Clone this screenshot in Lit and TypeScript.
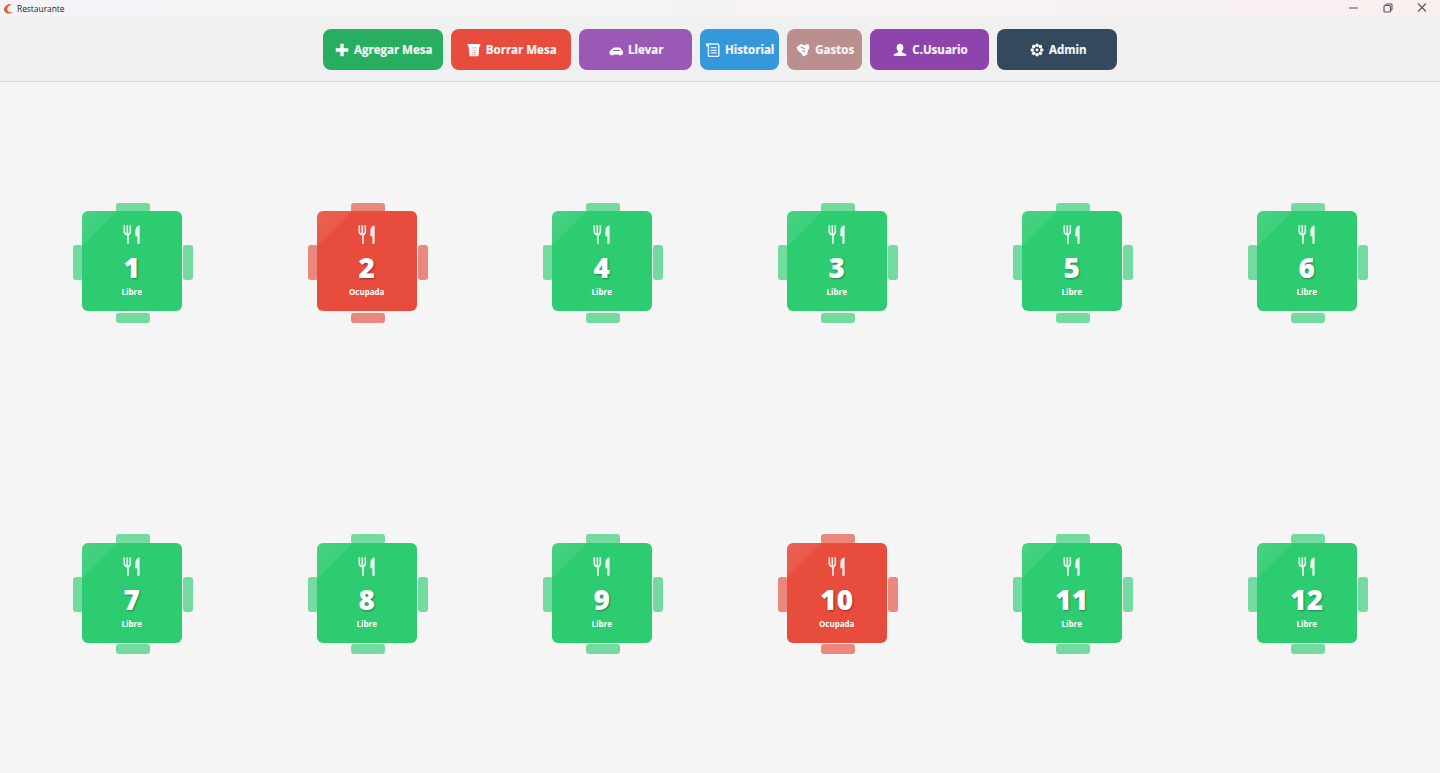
import { LitElement, html, css, svg } from "lit";
import { customElement } from "lit/decorators.js";

const gearDots = [0, 45, 90, 135, 180, 225, 270, 315].map((a) => {
  const r = (a * Math.PI) / 180;
  return svg`<circle cx="${7.5 + 5.1 * Math.cos(r)}" cy="${7.5 + 5.1 * Math.sin(r)}" r="1.9" fill="#fff"/>`;
});

const icons: Record<string, unknown> = {
  plus: svg`<path d="M5.700.8h3.600v4.900h4.900v3.600H9.300v4.900H5.700V9.300H.8V5.700h4.900z" fill="#fff"/>`,
  trash: svg`<path d="M.8 1h13.400v2.600h-1l-.9 10.600H2.700L1.800 3.600h-1z" fill="#fff"/><path d="M4.500 5.200h6M4.800 7.700h5.400M5 10.200h5M5.300 12.300h4.400" stroke="#eeaaa2" stroke-width=".9" fill="none"/>`,
  car: svg`<path d="M.6 12.300V9.700c0-1 .7-1.700 1.600-1.800l2.200-2.500c.4-.5 1-.7 1.600-.7h5c.8 0 1.400.4 1.700 1l.9 2.100c.8.200 1.300.8 1.300 1.600v2.900h-1.600c-.3.700-.9 1-1.500 1s-1.200-.3-1.500-1H5.200c-.3.700-.9 1-1.500 1s-1.200-.3-1.500-1z" fill="#fff"/><path d="M4.200 8h7.700" stroke="#9b59b6" stroke-width="1.200"/>`,
  scroll: svg`<path d="M.8 1h11.200c1 0 1.800.7 1.800 1.600v10.200c0 1-.8 1.700-1.800 1.700H3.500l-.9-.7V2.800H.8z" fill="none" stroke="#e6f3fc" stroke-width="1.500"/><path d="M5 5h6.500M5 7.800h6.500M5 10.600h6.500" stroke="#e6f3fc" stroke-width="1.300"/>`,
  money: svg`<path d="M.6 4.500 5.400 1.200l3 1.200 5-1.400 1 4.200-1.600 2.800-.9 4.200-3.900 2.200-2.400-3.300L2 8.400z" fill="#fff"/><path d="M5 4.300l4.600 2.200M6.600 8l3.400 1.600" stroke="#bc8f8f" stroke-width="1.200"/>`,
  user: svg`<path d="M7.500.8c2.300 0 3.600 1.700 3.600 4 0 1.800-.8 3.200-1.700 4v1.100l3.700 1.700c.8.400 1.200 1.100 1.200 2.200H.7c0-1.100.4-1.800 1.200-2.200l3.700-1.700V8.800c-.9-.8-1.700-2.200-1.700-4 0-2.300 1.300-4 3.600-4z" fill="#fff"/>`,
  gear: svg`${gearDots}<circle cx="7.500" cy="7.500" r="2.600" fill="#34495e"/><circle cx="7.500" cy="7.500" r="1.500" fill="#fff"/>`,
};

const buttons = [
  { label: "Agregar Mesa", icon: "plus", cls: "b-add", wide: 120 },
  { label: "Borrar Mesa", icon: "trash", cls: "b-del", wide: 120 },
  { label: "Llevar", icon: "car", cls: "b-take", wide: 113 },
  { label: "Historial", icon: "scroll", cls: "b-hist", wide: 79 },
  { label: "Gastos", icon: "money", cls: "b-cost", wide: 75 },
  { label: "C.Usuario", icon: "user", cls: "b-user", wide: 119.6 },
  { label: "Admin", icon: "gear", cls: "b-admin", wide: 120 },
];

const tables = [
  [1, false], [2, true], [4, false], [3, false], [5, false], [6, false],
  [7, false], [8, false], [9, false], [10, true], [11, false], [12, false],
] as [number, boolean][];

@customElement("app-root")
export class AppRoot extends LitElement {
  static styles = css`
    :host {
      display: flex;
      flex-direction: column;
      height: 773px;
      overflow: hidden;
      background: #f5f5f5;
      font-family: "Open Sans", "Liberation Sans", sans-serif;
    }
    .titlebar {
      height: 16px;
      flex: none;
      display: flex;
      align-items: center;
      padding-left: 3px;
      padding-right: 1px;
      background: linear-gradient(90deg, #f5f3f7, #f5f2f6 50%, #f9f0ef);
      color: #222;
      font-size: 8.4px;
    }
    .logo { width: 10px; height: 11px; margin-right: 4px; }
    .caption { margin-left: auto; display: flex; }
    .caption svg { width: 34px; height: 16px; display: block; }
    .toolbar {
      height: 66px;
      flex: none;
      box-sizing: border-box;
      padding-top: 13px;
      display: flex;
      justify-content: center;
      gap: 8px;
      background: #f0f0f0;
      border-bottom: 1px solid #dcdcdc;
    }
    .btn {
      height: 41px;
      box-sizing: border-box;
      padding-left: 2px;
      border-radius: 8px;
      display: flex;
      align-items: center;
      justify-content: center;
      gap: 5px;
      color: #f6f6f6;
      font-size: 11.5px;
      font-weight: 700;
      -webkit-text-stroke: 0.2px #f6f6f6;
      white-space: nowrap;
    }
    .btn svg { width: 14px; height: 14px; flex: none; }
    .b-add { background: #27ae60; }
    .b-del { background: #e74c3c; }
    .b-take { background: #9b59b6; }
    .b-hist { background: #3498db; }
    .b-cost { background: #bc8f8f; }
    .b-user { background: #8e44ad; }
    .b-admin { background: #34495e; }
    .floor {
      flex: 1;
      display: grid;
      grid-template-columns: repeat(6, 235px);
      grid-auto-rows: 331.5px;
      padding: 14.75px 0 0 15.2px;
    }
    .cell { display: flex; align-items: center; justify-content: center; }
    .table {
      display: grid;
      grid-template-columns: 9px 100px 11px;
      grid-template-rows: 8.5px 100px 11.5px;
      --c: #2ecc71;
    }
    .table.busy { --c: #e74c3c; }
    .chair { background: var(--c); opacity: 0.65; border-radius: 3px; }
    .chair.h { width: 34px; height: 10px; grid-column: 1 / -1; justify-self: center; }
    .chair.v { height: 35px; width: 10px; grid-row: 1 / -1; align-self: center; }
    .chair.top { grid-row: 1; }
    .chair.bottom { grid-row: 3; align-self: end; }
    .chair.left { grid-column: 1; }
    .chair.right { grid-column: 3; justify-self: end; }
    .card {
      grid-column: 2;
      grid-row: 2;
      position: relative;
      width: 100px;
      height: 100px;
      box-sizing: border-box;
      padding-top: 14px;
      border-radius: 6px;
      background:
        linear-gradient(135deg, rgba(255, 255, 255, 0.13) 0, rgba(255, 255, 255, 0.07) 17.5%, transparent 18%),
        var(--c);
      display: flex;
      flex-direction: column;
      align-items: center;
      color: #fff;
    }
    .utensils { width: 18px; height: 19px; display: block; margin-left: -1px; }
    .num {
      margin-top: 4px;
      height: 38px;
      line-height: 38px;
      font-size: 28px;
      font-weight: 800;
      text-shadow: 1px 1px 2px rgba(0, 0, 0, 0.35);
    }
    .state { font-size: 8px; font-weight: 700; line-height: 12px; }
  `;

  render() {
    return html`
      <div class="titlebar">
        <svg class="logo" viewBox="0 0 10 11">
          <path d="M8.5 1C5 .6 1.500 2.800 1 6c-.3 2.500 1.800 4.500 5 4.500 1.500 0 2.700-.4 3.500-1.200C6.800 9.600 4 8.600 4.300 6 4.500 4 6.500 2.500 8.500 1z" fill="#e2603a"/>
        </svg>
        Restaurante
        <div class="caption">
          <svg viewBox="0 0 34 16"><path d="M12 8h9" stroke="#555" stroke-width="1"/></svg>
          <svg viewBox="0 0 34 16"><rect x="13" y="5.5" width="6.500" height="6.500" rx="1" fill="none" stroke="#555" stroke-width="1.200"/><path d="M15 5V4h6v6h-1" fill="none" stroke="#555" stroke-width="1"/></svg>
          <svg viewBox="0 0 34 16"><path d="M13 3.500l8 8M21 3.500l-8 8" stroke="#555" stroke-width="1.100"/></svg>
        </div>
      </div>
      <div class="toolbar">
        ${buttons.map(
          (b) => html`<div class="btn ${b.cls}" style="width:${b.wide}px">
            <svg viewBox="0 0 15 15">${icons[b.icon]}</svg><span>${b.label}</span>
          </div>`
        )}
      </div>
      <div class="floor">
        ${tables.map(
          ([n, busy]) => html`<div class="cell">
            <div class="table ${busy ? "busy" : ""}">
              <div class="chair h top"></div>
              <div class="chair v left"></div>
              <div class="chair v right"></div>
              <div class="chair h bottom"></div>
              <div class="card">
                <svg class="utensils" viewBox="0 0 18 19">
                  <path d="M.8 .2h1.600v6.300c0 1 .7 1.700 1.400 1.900V.2h1.600v8.200c.7-.2 1.400-.9 1.400-1.900V.2h1.600v6.600c0 1.900-1.200 3.200-2.300 3.600v8.400H4.400v-8.400C2 10 .8 8.700 .8 6.800z" fill="#fff" opacity=".9" transform="translate(0.700 0)"/>
                  <path d="M17.600 .2v18.600h-2.200v-7.600h-2V5.500c0-2.800 1.700-4.700 4.200-5.300z" fill="#fff" opacity=".9"/>
                </svg>
                <div class="num">${n}</div>
                <div class="state">${busy ? "Ocupada" : "Libre"}</div>
              </div>
            </div>
          </div>`
        )}
      </div>
    `;
  }
}
